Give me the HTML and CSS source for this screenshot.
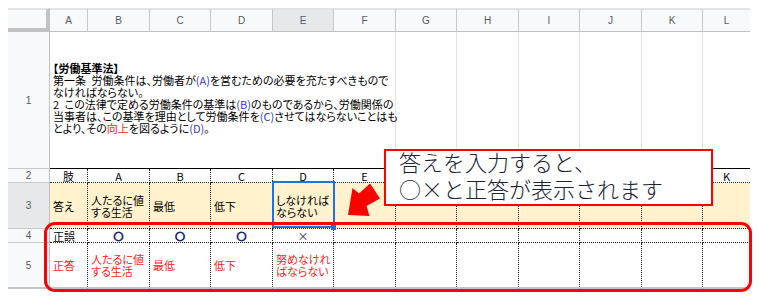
FILE: index.html
```html
<!DOCTYPE html>
<html lang="ja">
<head>
<meta charset="utf-8">
<title>労働基準法</title>
<link rel="stylesheet" href="styles.css">
</head>
<body>
<div class="page">
  <div class="sheet">
    <div class="corner"></div>
    <div class="colhead">A</div>
    <div class="colhead">B</div>
    <div class="colhead">C</div>
    <div class="colhead">D</div>
    <div class="colhead sel">E</div>
    <div class="colhead">F</div>
    <div class="colhead">G</div>
    <div class="colhead">H</div>
    <div class="colhead">I</div>
    <div class="colhead">J</div>
    <div class="colhead">K</div>
    <div class="colhead last">L</div>

    <div class="rowhead">1</div>
    <div class="cell1 merged">
      <div class="law">
        <span class="b"><span class="halt">【</span>労働基準法】</span><br>
        第一条&ensp;労働条件は、労働者が<span class="blue">(A)</span>を営むための必要を充たすべきもので<br>
        なければならない。<br>
        2&ensp;この法律で定める労働条件の基準は<span class="blue">(B)</span>のものであるから、労働関係の<br>
        当事者は、この基準を理由として労働条件を<span class="blue">(C)</span>させてはならないことはも<br>
        とより、その<span class="red">向上</span>を図るように<span class="blue">(D)</span>。
      </div>
    </div>
    <div class="cell1"></div>
    <div class="cell1"></div>
    <div class="cell1"></div>
    <div class="cell1"></div>
    <div class="cell1"></div>
    <div class="cell1 last"></div>

    <div class="rowhead">2</div>
    <div class="cell c">肢</div>
    <div class="cell c">A</div>
    <div class="cell c">B</div>
    <div class="cell c">C</div>
    <div class="cell c">D</div>
    <div class="cell c">E</div>
    <div class="cell c">F</div>
    <div class="cell c">G</div>
    <div class="cell c">H</div>
    <div class="cell c">I</div>
    <div class="cell c">J</div>
    <div class="cell c last">K</div>

    <div class="rowhead sel">3</div>
    <div class="cell y">答え</div>
    <div class="cell y">人たるに値<br>する生活</div>
    <div class="cell y">最低</div>
    <div class="cell y">低下</div>
    <div class="cell y">しなければ<br>ならない</div>
    <div class="cell y"></div>
    <div class="cell y"></div>
    <div class="cell y"></div>
    <div class="cell y"></div>
    <div class="cell y"></div>
    <div class="cell y"></div>
    <div class="cell y last"></div>

    <div class="rowhead">4</div>
    <div class="cell">正誤</div>
    <div class="cell c"><span class="ok">○</span></div>
    <div class="cell c"><span class="ok">○</span></div>
    <div class="cell c"><span class="ok">○</span></div>
    <div class="cell c"><span class="ng">×</span></div>
    <div class="cell"></div>
    <div class="cell"></div>
    <div class="cell"></div>
    <div class="cell"></div>
    <div class="cell"></div>
    <div class="cell"></div>
    <div class="cell last"></div>

    <div class="rowhead end">5</div>
    <div class="cell end red">正答</div>
    <div class="cell end red">人たるに値<br>する生活</div>
    <div class="cell end red">最低</div>
    <div class="cell end red">低下</div>
    <div class="cell end red">努めなけれ<br>ばならない</div>
    <div class="cell end"></div>
    <div class="cell end"></div>
    <div class="cell end"></div>
    <div class="cell end"></div>
    <div class="cell end"></div>
    <div class="cell end"></div>
    <div class="cell end last"></div>
  </div>

  <div class="selection"></div>
  <div class="handle"></div>
  <div class="focus"></div>
  <svg class="arrow" width="50" height="45" viewBox="0 0 50 45" aria-hidden="true">
    <polygon points="8,37 12.5,10 19,15.5 30,5.5 40,20.5 26.5,28 29.5,38" fill="#ff0000"/>
  </svg>
  <div class="callout">
    <div class="callout-text">答えを入力すると、<br>○×と正答が表示されます</div>
  </div>
</div>
</body>
</html>
```

FILE: styles.css
```css
html, body {
  margin: 0;
  padding: 0;
  background: #ffffff;
}

.page {
  position: relative;
  width: 759px;
  height: 303px;
  padding: 8px 0 0 8px;
  box-sizing: border-box;
  font-family: "Noto Sans CJK JP", "Noto Sans", sans-serif;
  color: #000;
}

.sheet {
  display: grid;
  grid-template-columns: 42px 38px 62px 61px 62px 61px 62px 61px 62px 61px 62px 61px 47px;
  grid-template-rows: 24px 137px 14px 46px 14px 46px;
}

.sheet > div {
  box-sizing: border-box;
  min-width: 0;
}

.corner {
  background: #f8f9fa;
  border-top: 2px solid #e3e3e3;
  border-right: 4px solid #c2c2c2;
  border-bottom: 4px solid #c2c2c2;
}

.colhead {
  background: #f8f9fa;
  border-top: 2px solid #e3e3e3;
  border-right: 1px solid #c8c8c8;
  border-bottom: 1px solid #c0c0c0;
  font-family: "Liberation Sans", Arial, sans-serif;
  font-size: 10px;
  color: #555a60;
  display: flex;
  align-items: center;
  justify-content: center;
}

.colhead.sel,
.rowhead.sel {
  background: #e6e8eb;
}

.colhead.last {
  border-right: none;
}

.rowhead {
  background: #f8f9fa;
  border-right: 1px solid #c0c0c0;
  border-bottom: 1px solid #c8c8c8;
  font-family: "Liberation Sans", Arial, sans-serif;
  font-size: 10px;
  color: #555a60;
  display: flex;
  align-items: center;
  justify-content: center;
}

.rowhead.end {
  border-bottom: 2px solid #c4c4c4;
}

.cell1 {
  border-right: 1px solid #e2e3e3;
  border-bottom: 1px solid #000;
}

.cell1.last {
  border-right: none;
}

.merged {
  grid-column: span 6;
  display: flex;
  align-items: center;
  padding: 0 0 4px 3px;
}

.law {
  font-size: 11px;
  line-height: 12.1px;
  white-space: nowrap;
  font-feature-settings: "palt";
}

.b {
  font-weight: 700;
}

.halt {
  font-feature-settings: "halt";
}

.blue {
  color: #3038c4;
}

.red {
  color: #ff1a1a;
}

.cell {
  border-right: 1px dotted #222;
  border-bottom: 1px dotted #222;
  display: flex;
  align-items: center;
  padding: 0 3px;
  font-size: 11px;
  line-height: 12px;
  white-space: nowrap;
  font-feature-settings: "palt";
}

.cell.c {
  justify-content: center;
  padding: 0;
}

.cell.y {
  background: #fff2cc;
}

.cell.last {
  border-right: none;
}

.cell.end {
  border-bottom: 2px solid #c4c4c4;
}

.ok {
  font-size: 9.5px;
  color: #20206e;
  -webkit-text-stroke: 1.2px #20206e;
}

.ng {
  font-size: 11px;
  color: #20206e;
}

.selection {
  position: absolute;
  left: 272px;
  top: 181px;
  width: 63px;
  height: 47px;
  box-sizing: border-box;
  border: 2px solid #1a73e8;
}

.handle {
  position: absolute;
  left: 331px;
  top: 225px;
  width: 5px;
  height: 5px;
  background: #1a73e8;
}

.focus {
  position: absolute;
  left: 44px;
  top: 222px;
  width: 708px;
  height: 70px;
  box-sizing: border-box;
  border: 3px solid #ff0000;
  border-radius: 11px;
}

.arrow {
  position: absolute;
  left: 340px;
  top: 178px;
}

.callout {
  position: absolute;
  left: 384px;
  top: 149px;
  width: 329px;
  height: 57px;
  box-sizing: border-box;
  border: 2px solid #ff0000;
  background: #ffffff;
  padding-left: 13px;
}

.callout-text {
  margin-top: -3px;
  font-size: 22px;
  font-weight: 300;
  line-height: 27px;
  color: #1a2236;
  white-space: nowrap;
}
```
